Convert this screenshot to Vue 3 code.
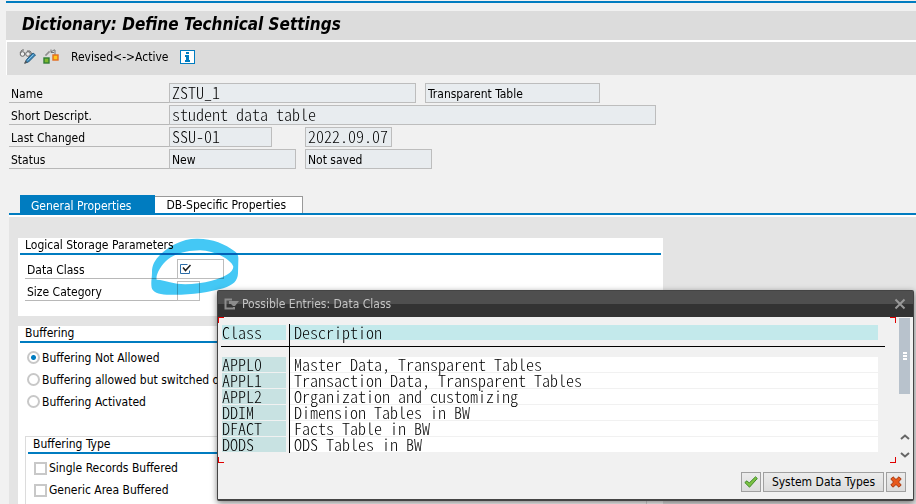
<script setup>
import { ref } from 'vue'

const buffering = ref('none')
const bufferingOptions = [
  { id: 'none', label: 'Buffering Not Allowed' },
  { id: 'off', label: 'Buffering allowed but switched off' },
  { id: 'on', label: 'Buffering Activated' },
]
const bufferingTypes = [
  { id: 'single', label: 'Single Records Buffered' },
  { id: 'generic', label: 'Generic Area Buffered' },
]
const entries = [
  ['APPL0', 'Master Data, Transparent Tables'],
  ['APPL1', 'Transaction Data, Transparent Tables'],
  ['APPL2', 'Organization and customizing'],
  ['DDIM', 'Dimension Tables in BW'],
  ['DFACT', 'Facts Table in BW'],
  ['DODS', 'ODS Tables in BW'],
]
</script>

<template>
  <div class="screen">
    <header class="top">
      <h1>Dictionary: Define Technical Settings</h1>
      <nav class="toolbar">
        <button class="tool" aria-label="Display or change">
          <svg width="18" height="18" viewBox="0 0 18 18" fill="none">
            <path d="M1 5 3 2h2M8 3h3l2 3" stroke="#666" />
            <circle cx="3.5" cy="6" r="2.3" stroke="#666" fill="#eee" />
            <circle cx="9" cy="6" r="2.3" stroke="#666" fill="#eee" />
            <path d="M6 15 7.500 11.500 14 5l2.500 2L9.500 14z" fill="#3a86b8" stroke="#2b6084" />
            <path d="M8.500 12.500 14.500 6.500" stroke="#8cc4e6" />
            <path d="M5 16 6.500 12.500 8.500 14.500z" fill="#555" />
          </svg>
        </button>
        <button class="tool" aria-label="Active or inactive">
          <svg width="16" height="16" viewBox="0 0 16 16" fill="none">
            <path d="M3 7V5h2V3h2M8 3l3-2h1v5M8 .5v3h3" stroke="#777" />
            <rect x="1" y="9" width="5" height="5" fill="#7cb82f" stroke="#2f7d32" stroke-width="1.400" />
            <rect x="10" y="6" width="5" height="5" fill="#ffc61a" stroke="#e36c1e" stroke-width="1.400" />
          </svg>
        </button>
        <button class="tool text">Revised&lt;-&gt;Active</button>
        <button class="tool" aria-label="Information">
          <svg width="15" height="14" viewBox="0 0 15 14">
            <rect x=".5" y=".5" width="14" height="13" fill="#fff" stroke="#007cc0" />
            <path d="M6 2h3v2H6zM5 5h4v5h1v2H5v-2h1V7H5z" fill="#007cc0" />
          </svg>
        </button>
      </nav>
    </header>

    <section class="details">
      <div class="row">
        <label for="name">Name</label>
        <input id="name" class="field mono w-name" value="ZSTU_1" readonly />
        <input class="field w-kind" aria-label="Table category" value="Transparent Table" readonly />
      </div>
      <div class="row">
        <label for="descr">Short Descript.</label>
        <input id="descr" class="field mono w-descr" value="student data table" readonly />
      </div>
      <div class="row">
        <label for="changed">Last Changed</label>
        <span class="slot"><input id="changed" class="field mono w-user" value="SSU-01" readonly /></span>
        <input class="field mono w-date" aria-label="Change date" value="2022.09.07" readonly />
      </div>
      <div class="row">
        <label for="status">Status</label>
        <span class="slot"><input id="status" class="field w-status" value="New" readonly /></span>
        <input class="field w-status" aria-label="Save status" value="Not saved" readonly />
      </div>
    </section>

    <div class="tabs" role="tablist">
      <button class="tab active" role="tab" aria-selected="true">General Properties</button>
      <button class="tab" role="tab" aria-selected="false">DB-Specific Properties</button>
    </div>

    <main class="panel">
      <section class="card storage">
        <h2>Logical Storage Parameters</h2>
        <div class="fields">
          <div class="row">
            <label for="dataclass">Data Class</label>
            <span class="entry w-class">
              <svg width="12" height="12" viewBox="0 0 12 12" fill="none">
                <path d="M7.500 1.500H.5v9h9V7.500" stroke="#2b6ca8" />
                <path d="m3 4.500 2.500 3L10.500 2" stroke="#222" stroke-width="1.500" />
              </svg>
              <input id="dataclass" />
            </span>
          </div>
          <div class="row">
            <label for="sizecat">Size Category</label>
            <span class="entry w-size"><input id="sizecat" /></span>
          </div>
        </div>
        <svg class="marker" width="90" height="60" viewBox="450 156 270 180" aria-hidden="true">
          <path
            fill="#44c8f5"
            fill-rule="evenodd"
            d="M456 262C456 240 464 226 482 208C505 185 545 161 590 161C635 160 675 176 704 199C712 205 716 212 715 225L714 265C713 288 700 300 670 310C625 323 560 332 500 329C475 328 458 320 455 308C452 292 456 280 456 262ZM470 284C466 270 484 238 505 222C530 203 565 197 600 196C645 197 694 224 700 245C700 262 670 278 635 287C595 297 545 302 510 292C498 288 484 285 470 284Z"
          />
        </svg>
      </section>

      <section class="card buffering">
        <h2>Buffering</h2>
        <div class="choices">
          <label v-for="o in bufferingOptions" :key="o.id" class="choice">
            <input v-model="buffering" type="radio" name="buffering" :value="o.id" />
            <span>{{ o.label }}</span>
          </label>
        </div>
        <div class="group">
          <h2>Buffering Type</h2>
          <div class="checks">
            <label v-for="t in bufferingTypes" :key="t.id" class="choice">
              <input type="checkbox" :name="t.id" />
              <span>{{ t.label }}</span>
            </label>
          </div>
        </div>
      </section>
    </main>

    <div class="dialog" role="dialog" aria-labelledby="dialog-title">
      <div class="titlebar">
        <svg width="15" height="12" viewBox="0 0 15 12" fill="none">
          <path d="M8 1.500H1.500v9H10V9" stroke="#8c8c8c" stroke-width="2" />
          <path d="M5 3h10l-4 5H9L7 6H5z" fill="#8c8c8c" />
        </svg>
        <span id="dialog-title">Possible Entries: Data Class</span>
        <button class="close" aria-label="Close">
          <svg width="12" height="12" viewBox="0 0 12 12">
            <path d="m1.500 1.500 9 9m0-9-9 9" stroke="#999" stroke-width="2" />
          </svg>
        </button>
      </div>
      <div class="content">
        <div class="list">
          <i class="corner tl"></i><i class="corner tr"></i><i class="corner bl"></i><i class="corner br"></i>
          <table class="mono">
            <thead>
              <tr>
                <th scope="col"><span>Class</span></th>
                <th scope="col"><span>Description</span></th>
              </tr>
            </thead>
            <tbody>
              <tr v-for="e in entries" :key="e[0]">
                <td><span>{{ e[0] }}</span></td>
                <td><span>{{ e[1] }}</span></td>
              </tr>
            </tbody>
          </table>
        </div>
        <div class="scroll">
          <div class="thumb"><i></i><i></i><i></i></div>
          <button aria-label="Scroll up">
            <svg width="10" height="6" viewBox="0 0 10 6" fill="none"><path d="m1 5 4-3.500L9 5" stroke="#666" stroke-width="2" /></svg>
          </button>
          <button aria-label="Scroll down">
            <svg width="10" height="6" viewBox="0 0 10 6" fill="none"><path d="m1 1 4 3.500L9 1" stroke="#666" stroke-width="2" /></svg>
          </button>
        </div>
      </div>
      <footer class="actions">
        <button class="btn icon" aria-label="Continue">
          <svg width="14" height="12" viewBox="0 0 14 12">
            <path d="M.8 6.500 3 4.800 5.200 7 11.500.8 13.300 2.500 5.500 11.200z" fill="#7cc142" stroke="#3f8a2a" />
          </svg>
        </button>
        <button class="btn">System Data Types</button>
        <button class="btn icon" aria-label="Cancel">
          <svg width="12" height="12" viewBox="0 0 12 12">
            <path d="M.8 3 3 .8 6 3.500 9 .8 11.200 3 8.500 6l2.700 3L9 11.200 6 8.500 3 11.200.8 9 3.500 6z" fill="#e8591c" stroke="#a8360c" />
          </svg>
        </button>
      </footer>
    </div>
  </div>
</template>

<style>
body {
  background: #f1f1f1;
}
</style>

<style scoped>
* {
  box-sizing: border-box;
}
.screen {
  position: relative;
  display: flex;
  flex-direction: column;
  height: 100vh;
  overflow: hidden;
  background: #f1f1f1;
  color: #000;
  font-family: "DejaVu Sans Condensed", "Noto Sans", sans-serif;
  font-size: 12px;
  line-height: 16px;
}
button,
input {
  font: inherit;
  color: inherit;
  margin: 0;
}
button {
  padding: 0;
  border: 0;
  background: none;
  white-space: nowrap;
}
.mono {
  font-family: "Noto Sans CJK KR", monospace;
  font-feature-settings: "hwid";
  font-size: 16px;
  font-weight: 300;
}
.top {
  margin: 1px 0 0 6px;
  border-top: 2px solid #007cc0;
  padding-top: 8px;
}
h1 {
  margin: 0;
  padding: 0 16px 2px;
  background: #dcdcdc;
  font-size: 17px;
  line-height: 27px;
  font-style: italic;
  font-weight: bold;
}
.toolbar {
  display: flex;
  align-items: center;
  gap: 6px;
  height: 35px;
  padding: 0 12px 3px;
  border-top: 2px solid #fff;
  border-left: 1px solid #fff;
  background: #dcdcdc;
}
.tool {
  display: flex;
}
.tool.text {
  margin: 0 6px;
}
.details {
  display: flex;
  flex-direction: column;
  gap: 2px;
  padding: 8px 9px 0;
}
.row {
  display: flex;
  height: 20px;
}
.row label {
  width: 160px;
  padding: 3px 2px 0;
  border-bottom: 1px solid #b8b8b8;
}
.field {
  height: 20px;
  padding: 2px 2px 0;
  border: 1px solid #bdbdbd;
  border-radius: 0;
  background: #e8ecef;
  outline: 0;
}
.field.mono {
  padding: 0 2px 2px;
}
.slot {
  width: 136px;
}
.w-name {
  width: 247px;
  margin-right: 9px;
}
.w-kind {
  width: 175px;
}
.w-descr {
  width: 487px;
}
.w-user {
  width: 103px;
}
.w-date {
  width: 87px;
}
.w-status {
  width: 127px;
}
.tabs {
  display: flex;
  align-items: flex-end;
  margin: 26px 0 0 9px;
  padding-left: 11px;
  border-bottom: 2px solid #007cc0;
}
.tab {
  height: 17px;
  padding: 0 16px 0 12px;
  border: 1px solid #999;
  border-width: 1px 1px 0 0;
  background: #fff;
}
.tab.active {
  height: 18px;
  padding: 3px 23px 0 11px;
  border: 0;
  background: #007cc0;
  color: #fff;
}
.panel {
  flex: 1;
  margin-left: 9px;
  padding: 21px 9px 0;
  border-top: 2px solid #fff;
  background: #e4e4e4;
}
.card {
  position: relative;
  width: 75%;
  max-width: 645px;
  padding: 0 2px;
  background: #fff;
}
h2 {
  margin: 0;
  padding-left: 5px;
  border-bottom: 2px solid #007cc0;
  font-size: 12px;
  font-weight: normal;
  line-height: 15px;
}
.storage {
  padding-bottom: 15px;
  margin-bottom: 10px;
}
.fields {
  display: flex;
  flex-direction: column;
  gap: 2px;
  padding: 4px 5px 0;
}
.fields .row label {
  width: 152px;
}
.entry {
  display: flex;
  align-items: center;
  border: 1px solid #bdbdbd;
  padding: 0 2px;
}
.entry input {
  flex: 1;
  min-width: 0;
  padding: 0;
  border: 0;
  background: none;
  outline: 0;
}
.w-class {
  width: 47px;
}
.w-size {
  width: 23px;
}
.marker {
  position: absolute;
  left: 132px;
  top: -1px;
  mix-blend-mode: multiply;
}
.buffering {
  min-height: 240px;
}
.choices,
.checks {
  display: flex;
  flex-direction: column;
  gap: 6px;
  padding: 6px 7px 0;
}
.choice {
  display: flex;
  align-items: center;
  gap: 2px;
  height: 16px;
  white-space: nowrap;
}
.choice span {
  line-height: 18px;
}
.choice input {
  appearance: none;
  width: 13px;
  height: 13px;
  border: 2px solid #c8c8c8;
  background: #fff;
}
.choice input[type="radio"] {
  border-radius: 50%;
}
.choice input[type="radio"]:checked {
  background: radial-gradient(circle, #007cc0 2px, #fff 3px);
}
.choices .choice span {
  padding-top: 1px;
}
.group {
  margin: 27px 14px 0 5px;
  padding: 0 2px;
  min-height: 120px;
  border: 1px solid #dcdcdc;
}
.checks {
  padding: 6px 6px 0;
}
.dialog {
  position: absolute;
  top: 290px;
  left: 217px;
  right: 2px;
  border: 1px solid #444;
  border-bottom-width: 2px;
  border-radius: 2px;
  background: #f1f1f1;
  box-shadow: 0 2px 6px rgba(0, 0, 0, 0.5);
}
.titlebar {
  display: flex;
  align-items: center;
  gap: 3px;
  height: 26px;
  padding: 0 7px 0 6px;
  background: linear-gradient(#4f4f4f 50%, #333 50%);
  color: #c4c4c4;
}
.close {
  display: flex;
  margin-left: auto;
}
.content {
  display: flex;
  height: 146px;
}
.list {
  position: relative;
  flex: 1;
  padding: 7px 11px 0 3px;
}
.corner {
  position: absolute;
  width: 6px;
  height: 6px;
  border: 0 solid #e00000;
}
.tl {
  top: 0;
  left: 0;
  border-width: 1px 0 0 1px;
}
.tr {
  top: 0;
  right: 0;
  border-width: 1px 1px 0 0;
}
.bl {
  bottom: 0;
  left: 0;
  border-width: 0 0 1px 1px;
}
.br {
  bottom: 0;
  right: 0;
  border-width: 0 1px 1px 0;
}
table {
  width: 100%;
  border-collapse: separate;
  border-spacing: 0;
  line-height: 15px;
}
th,
td {
  height: 16px;
  padding: 0 7px 0 0;
  text-align: left;
  vertical-align: top;
  font-weight: inherit;
  border: 0;
}
th:first-child,
td:first-child {
  width: 69px;
  padding: 0 3px 0 1px;
  border-right: 1px solid #000;
}
thead tr th,
thead tr th:first-child {
  height: 23px;
  padding-top: 1px;
  border-bottom: 1px solid #000;
}
tbody tr:first-child td {
  height: 26px;
  padding-top: 10px;
}
th span,
td span {
  display: block;
  height: 15px;
  line-height: 14px;
  white-space: pre;
  background: #fff;
}
th:last-child span,
td:last-child span {
  padding-left: 4px;
}
td:first-child span {
  background: #c8e2e2;
}
th span {
  background: #c3e9eb;
}
.scroll {
  display: flex;
  flex-direction: column;
  align-items: center;
  gap: 12px;
  width: 17px;
  padding: 1px 0 5px;
}
.scroll button {
  display: flex;
}
.thumb {
  display: flex;
  flex-direction: column;
  align-items: center;
  justify-content: center;
  gap: 1px;
  width: 11px;
  height: 76px;
  margin-bottom: auto;
  background: #b8c2cc;
}
.thumb i {
  width: 4px;
  height: 2px;
  background: #fff;
}
.actions {
  display: flex;
  justify-content: flex-end;
  gap: 2px;
  padding: 9px 7px 7px;
}
.btn {
  display: flex;
  align-items: center;
  justify-content: center;
  height: 20px;
  padding: 0 8px;
  border: 1px solid #a0a0a0;
  background: linear-gradient(#ececec, #dcdcdc);
}
.btn.icon {
  width: 20px;
  padding: 0;
}
</style>
